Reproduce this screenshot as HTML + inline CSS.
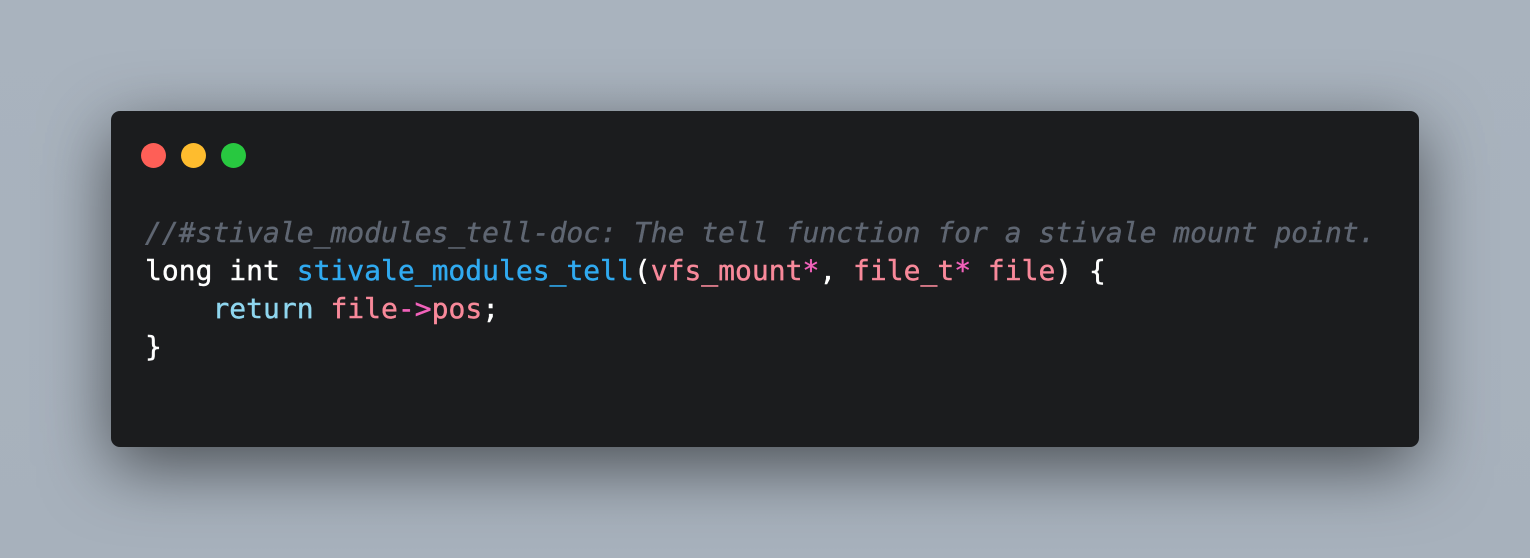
<!DOCTYPE html>
<html><head><meta charset="utf-8"><style>
html,body{margin:0;padding:0}
body{width:1530px;height:558px;background:linear-gradient(180deg,#a9b3be 0%,#a7b1bc 100%);position:relative;overflow:hidden}
.win{position:absolute;left:111px;top:111px;width:1308px;height:336px;background:#1b1c1e;border-radius:9px;box-shadow:0 20px 68px rgba(0,0,0,0.55)}
.dot{position:absolute;top:32px;width:25px;height:25px;border-radius:50%}
pre{position:absolute;left:34px;top:103px;margin:0;font-family:"DejaVu Sans Mono","Liberation Mono",monospace;font-size:28px;line-height:38px;color:#ffffff;-webkit-text-stroke:0.4px currentColor}
.c{color:#5f6672;font-style:italic}
.f{color:#30aaf0}
.k{color:#8fd6ef}
.v{color:#f8899a}
.o{color:#f262bb}
</style></head><body>
<div class="win">
<div class="dot" style="left:30px;background:#fe5f57"></div>
<div class="dot" style="left:70px;background:#febc2e"></div>
<div class="dot" style="left:110px;background:#28c840"></div>
<pre><span class="c">//#stivale_modules_tell-doc: The tell function for a stivale mount point.</span>
long int <span class="f">stivale_modules_tell</span>(<span class="v">vfs_mount</span><span class="o">*</span>, <span class="v">file_t</span><span class="o">*</span> <span class="v">file</span>) {
    <span class="k">return</span> <span class="v">file</span><span class="o">-&gt;</span><span class="v">pos</span>;
}</pre>
</div>
</body></html>
